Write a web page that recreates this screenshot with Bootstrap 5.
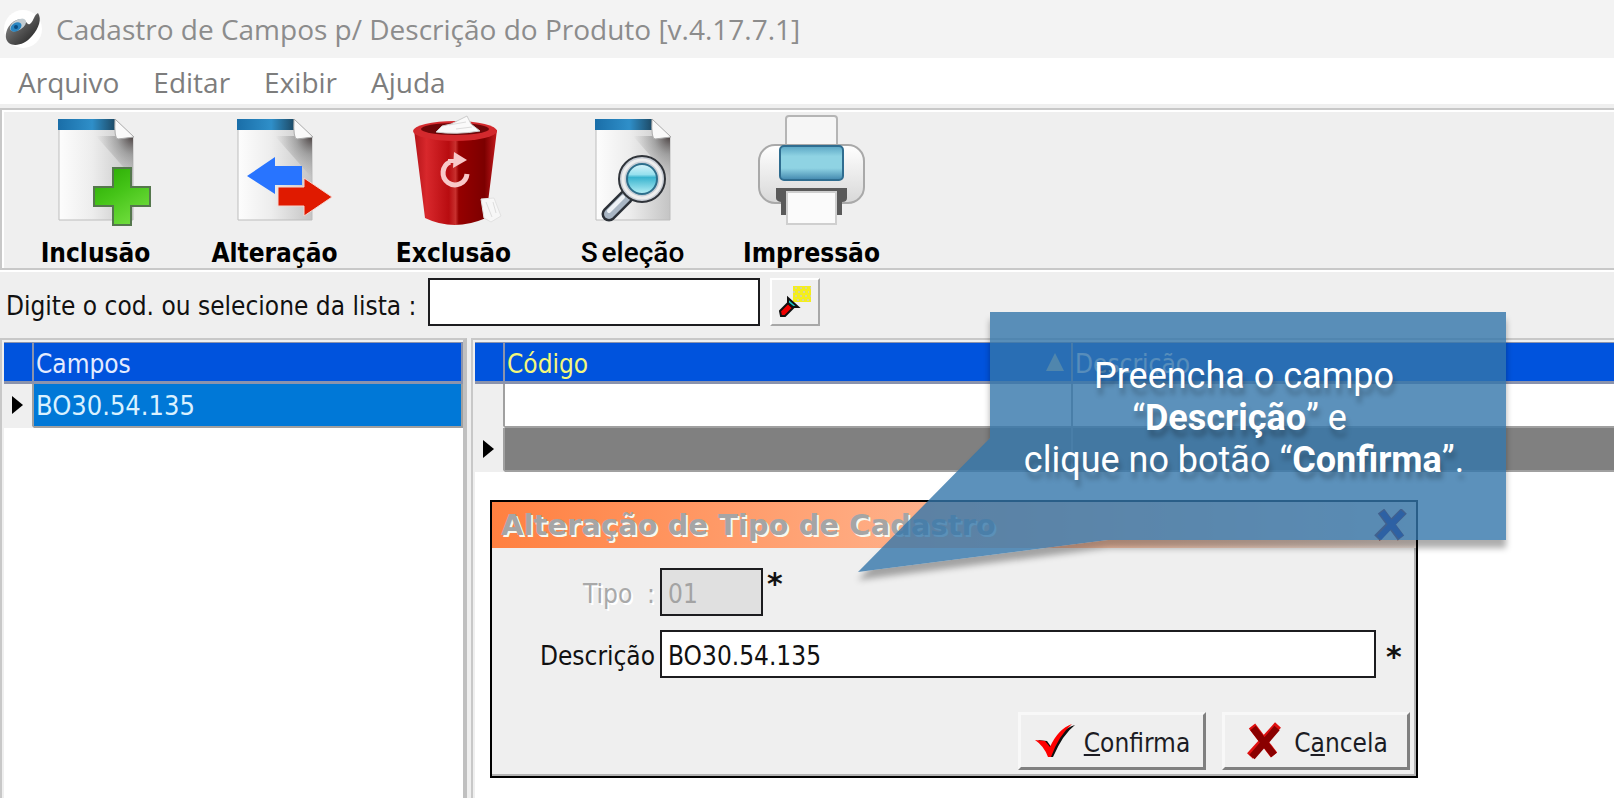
<!DOCTYPE html>
<html lang="pt-BR">
<head>
<meta charset="utf-8">
<meta name="viewport" content="width=device-width, initial-scale=1">
<title>Cadastro de Campos p/ Descrição do Produto</title>
<link rel="stylesheet" href="https://cdn.jsdelivr.net/npm/bootstrap@5.3.0/dist/css/bootstrap.min.css">
<style>
  body { background: #efefef; color: #111; overflow: hidden; font: 26px/32px "DejaVu Sans Condensed", "DejaVu Sans", sans-serif; }
  .titlebar { height: 58px; background: #f3f3f3; color: #8c8c8c; font: 28px/40px "Open Sans", sans-serif; gap: 14px; }
  .menubar { height: 46px; background: #fff; font: 28px/40px "Open Sans", sans-serif; gap: 34px; padding: 2px 18px 0; }
  .menubar a { color: #7d7d7d; }
  .toolbar { margin-top: 4px; border: solid #c8c8c8; border-width: 2px 0 2px 2px; box-shadow: inset 2px 2px #fff, 0 2px #fff; padding: 4px 0 0 4px; }
  .tool { width: 179px; border: 0; background: none; padding: 0; color: #000; font-weight: 700; line-height: 30px; }
  .tool svg { width: 120px; height: 114px; margin-bottom: 10px; }
  .tool.plain { font: 500 28px/30px Roboto, sans-serif; }
  .searchbar { height: 68px; padding: 8px 0 0 6px; }
  .searchbar label { width: 422px; padding-top: 12px; }
  .field { height: 48px; border: 2px solid #1c1c1f; border-radius: 0; background: #fff; color: #111; padding: 3px 6px 0; }
  .field:disabled { background: #e0e0e0; color: #a3a3a3; }
  .search-input { width: 332px; }
  .bevel { border: 2px solid; border-color: #fff #a8a8a8 #a8a8a8 #fff; background: #efefef; color: #1c1c24; padding: 0; }
  .lookup { width: 50px; height: 48px; margin-left: 10px; }
  .panel { background: #fff; border: solid #c8c8c8; border-width: 2px 0 0 2px; box-shadow: inset 2px 2px #efefef; padding: 2px 0 0 2px; }
  .panel-left { width: 467px; border-right: 4px solid #c0c0c0; }
  .panel-right { margin-left: 4px; }
  .grid { table-layout: fixed; width: 100%; border-collapse: separate; border-spacing: 0; line-height: 32px; }
  .grid th { height: 42px; background: #0053dd; color: #e4ebff; font-weight: 400; padding: 4px 2px 0; border: solid #8a93ad; border-width: 1px 2px 3px 0; }
  .grid td { height: 44px; padding: 2px 2px 0; border: solid #a0a0a0; border-width: 0 2px 2px 0; font-size: 27px; }
  .panel-right th:last-child, .panel-right td:last-child { border-right: 0; }
  .grid .marker { width: 30px; }
  .grid td.marker { background: #efefef; border-bottom-color: #efefef; padding: 0 0 0 8px; line-height: 0; }
  .grid .picked { background: #0078d7; color: #d9f1ff; }
  .grid .current { background: #808080; }
  .grid th.sorted { width: 568px; color: #f3f77c; }
  .dialog { left: 490px; top: 500px; width: 928px; height: 278px; border: 2px solid #000; background: #efefef; box-shadow: inset -2px -2px #b4b4b4; }
  .dialog-title { height: 46px; padding: 0 9px; background: linear-gradient(90deg, #ff8040, #ffaa80 40%, #efe4de); }
  .dialog-title h1 { font: 700 29px/44px "DejaVu Sans", sans-serif; color: #a5a5a5; text-shadow: 2px 2px #f8f8f0; }
  .form-rows { padding: 20px 6px 0; row-gap: 14px; }
  .form-rows label { width: 162px; text-align: right; padding: 3px 5px 0 0; white-space: pre; }
  .faded { color: #a9a9a9; text-shadow: 2px 2px #fff; }
  .tipo-input { width: 103px; }
  .star { font: 700 30px/32px "DejaVu Sans", sans-serif; width: 24px; padding-left: 4px; }
  .star.wide { margin-left: 6px; width: 28px; padding-top: 6px; }
  .actions { padding: 34px 6px 0 0; gap: 16px; }
  .actions .bevel { width: 188px; height: 58px; border-width: 3px; border-color: #f8f8f8 #808080 #808080 #f8f8f8; gap: 8px; }
  .actions span { padding-top: 4px; }
  .callout { left: 858px; top: 312px; width: 648px; height: 260px; z-index: 3; }
  .callout svg { overflow: visible; }
  .callout p { padding: 43px 16px 0 140px; color: #fff; font: 36px/42px Roboto, sans-serif; text-shadow: 2px 7px 5px rgba(0,0,0,.25); }
  .cast { filter: blur(3px); }
</style>
</head>
<body class="vh-100 d-flex flex-column position-relative">

<svg width="0" height="0" class="position-absolute" aria-hidden="true">
  <defs>
    <linearGradient id="paper" x1="0" y1="0" x2="1" y2="0"><stop offset="0" stop-color="#fdfdfd"/><stop offset=".45" stop-color="#ededed"/><stop offset="1" stop-color="#c4c4c4"/></linearGradient>
    <linearGradient id="band" x1="0" x2="1"><stop offset="0" stop-color="#1a6ea8"/><stop offset=".6" stop-color="#2f8fc9"/><stop offset="1" stop-color="#1d4a66"/></linearGradient>
    <radialGradient id="foldshade" cx="1" cy="0" r="1"><stop offset="0" stop-color="#463c3c"/><stop offset=".45" stop-color="#777" stop-opacity=".5"/><stop offset="1" stop-color="#999" stop-opacity="0"/></radialGradient>
    <linearGradient id="green" x1="0" y1="0" x2=".6" y2="1"><stop offset="0" stop-color="#25a800"/><stop offset=".5" stop-color="#45c418"/><stop offset="1" stop-color="#6fdc3c"/></linearGradient>
    <linearGradient id="redbin"><stop offset="0" stop-color="#b41318"/><stop offset=".15" stop-color="#d8282c"/><stop offset=".42" stop-color="#b80c10"/><stop offset=".5" stop-color="#c8302e"/><stop offset=".54" stop-color="#960000"/><stop offset=".85" stop-color="#7c0000"/><stop offset="1" stop-color="#c41a1e"/></linearGradient>
    <linearGradient id="lens" x2="0" y2="1"><stop offset="0" stop-color="#d9f4fa"/><stop offset=".35" stop-color="#96e0ee"/><stop offset=".45" stop-color="#3ab4cf"/><stop offset="1" stop-color="#b8f0f6"/></linearGradient>
    <linearGradient id="body" x2="0" y2="1"><stop offset="0" stop-color="#fff"/><stop offset="1" stop-color="#d8d8d8"/></linearGradient>
    <linearGradient id="glass" x2="0" y2="1"><stop offset="0" stop-color="#5aa5c4"/><stop offset=".3" stop-color="#8fd3e3"/><stop offset=".65" stop-color="#8fd3e3"/><stop offset="1" stop-color="#4287ae"/></linearGradient>
    <linearGradient id="eye" x2="1" y2="1"><stop offset="0" stop-color="#999"/><stop offset=".5" stop-color="#555"/><stop offset="1" stop-color="#181818"/></linearGradient>
    <g id="doc">
      <path d="M23 6H78L97 23V106H23Z" fill="url(#paper)" stroke="#bdbdbd"/>
      <rect x="22" y="5" width="57" height="11" fill="url(#band)"/>
      <path d="M60 22H97V64Z" fill="url(#foldshade)"/>
      <path d="M79 5L98 23L82 25Q78 25 79 5Z" fill="#fafafa" stroke="#aaa"/>
    </g>
  </defs>
</svg>

<header class="titlebar d-flex align-items-center flex-shrink-0 ps-1">
  <svg width="38" height="38" viewBox="0 0 38 38" aria-hidden="true">
    <circle cx="19" cy="19" r="19" fill="#fff"/>
    <path d="M2 28C1 19 8 9 18 9C23 10 23 17 27 13C30 10 30 5 34 3C38 9 35 18 28 26C19 37 4 38 2 28Z" fill="url(#eye)"/>
    <ellipse cx="14" cy="15" rx="9" ry="5" fill="#c3ccd1" transform="rotate(-32 14 15)"/>
    <ellipse cx="12" cy="17" rx="6" ry="4" fill="#2a86c2" transform="rotate(-32 12 17)"/><circle cx="12" cy="17" r="2" fill="#0b4b80"/>
  </svg>
  <span class="text-nowrap">Cadastro de Campos p/ Descrição do Produto [v.4.17.7.1]</span>
</header>

<nav class="menubar d-flex align-items-center flex-shrink-0">
  <a class="text-decoration-none" href="#">Arquivo</a>
  <a class="text-decoration-none" href="#">Editar</a>
  <a class="text-decoration-none" href="#">Exibir</a>
  <a class="text-decoration-none" href="#">Ajuda</a>
</nav>

<div class="toolbar d-flex flex-shrink-0">
  <button type="button" class="tool d-flex flex-column align-items-center">
    <svg viewBox="0 0 120 114" aria-hidden="true"><use href="#doc"/><path d="M77 54H95V73H114V92H95V111H77V92H58V73H77Z" fill="url(#green)" stroke="#55774d" stroke-width="2"/></svg>
    Inclusão
  </button>
  <button type="button" class="tool d-flex flex-column align-items-center">
    <svg viewBox="0 0 120 114" aria-hidden="true"><use href="#doc"/><path d="M32 62L60 43V52H87V71H60V80Z" fill="#2874ff"/><path d="M63 73H89V64L117 83L89 102V92H63Z" fill="#e01a00" stroke="#f6d6d0"/></svg>
    Alteração
  </button>
  <button type="button" class="tool d-flex flex-column align-items-center">
    <svg viewBox="0 0 120 114" aria-hidden="true">
      <path d="M20 16L31 104Q60 118 92 104L103 16Z" fill="url(#redbin)"/>
      <ellipse cx="61" cy="17" rx="42" ry="10" fill="#d3292d"/><ellipse cx="61" cy="15" rx="34" ry="6" fill="#6d0608"/>
      <path d="M42 18L48 12L57 10L73 2L77 10L86 17Q62 21 42 18Z" fill="#fafafa" stroke="#ccc"/><path d="M55 11L72 8M62 15L78 13" stroke="#ddd"/>
      <path d="M56 48A12 12 0 1 0 73 60" fill="none" stroke="#f8c9c9" stroke-width="5"/><path d="M60 38L73 46L59 54Z" fill="#f8c9c9"/><path d="M54 47L66 47" stroke="#f8c9c9" stroke-width="4"/>
      <path d="M87 85L100 84L107 102L97 108L90 104Z" fill="#f7f7f7" stroke="#e2e2e2"/><path d="M92 88L98 103M99 88L102 99" stroke="#ddd"/>
    </svg>
    Exclusão
  </button>
  <button type="button" class="tool plain d-flex flex-column align-items-center">
    <svg viewBox="0 0 120 114" aria-hidden="true"><use href="#doc"/>
      <path d="M53 83L36 100" stroke="#2c3138" stroke-width="15" stroke-linecap="round"/><path d="M53 83L36 100" stroke="#a9b6c4" stroke-width="10" stroke-linecap="round"/><path d="M50 83L36 97" stroke="#eef2f6" stroke-width="4" stroke-linecap="round"/>
      <circle cx="69" cy="65" r="23" fill="#c9ced6" stroke="#30343a" stroke-width="2"/><circle cx="69" cy="65" r="19" fill="none" stroke="#eee" stroke-width="3"/><circle cx="69" cy="65" r="15" fill="url(#lens)" stroke="#2d6f8c" stroke-width="2"/>
    </svg>
    <span><span class="me-1">S</span>eleção</span>
  </button>
  <button type="button" class="tool d-flex flex-column align-items-center">
    <svg viewBox="0 0 120 114" aria-hidden="true">
      <rect x="34" y="2" width="51" height="40" rx="3" fill="#f6f6f6" stroke="#b5b5b5" stroke-width="2"/>
      <rect x="7" y="31" width="105" height="58" rx="16" fill="url(#body)" stroke="#a9a9a9" stroke-width="2"/>
      <path d="M24 74H95V84Q95 88 90 88V101H29V88Q24 87 24 84Z" fill="#5a5a5a"/>
      <rect x="28" y="32" width="63" height="34" rx="4" fill="url(#glass)" stroke="#2f6d90" stroke-width="2"/>
      <path d="M35 78H84V110H35Z" fill="#fbfbfb" stroke="#cfcfcf" stroke-width="2"/>
    </svg>
    Impressão
  </button>
</div>

<form class="searchbar d-flex flex-shrink-0">
  <label for="cod" class="text-nowrap">Digite o cod. ou selecione da lista :</label>
  <input id="cod" type="text" class="field search-input">
  <button type="button" class="bevel lookup" aria-label="Localizar">
    <svg width="36" height="34" viewBox="0 0 36 34" class="d-block mx-auto" aria-hidden="true">
      <rect x="16" y="1" width="18" height="16" fill="#f4ee1c"/><path d="M18 3H34M16 7H32M18 11H34M20 15H34" stroke="#d8d49a" stroke-width="2" stroke-dasharray="2 3"/>
      <path d="M3 26L11 18L16 23L8 31H4Z" fill="#f00000" stroke="#111" stroke-width="2"/>
      <path d="M11 13L21 22L16 22L11 18Z" fill="#1cc8c8" stroke="#111" stroke-width="2"/>
    </svg>
  </button>
</form>

<main class="d-flex flex-grow-1">
  <section class="panel panel-left flex-shrink-0">
    <table class="grid">
      <thead><tr><th class="marker"></th><th>Campos</th></tr></thead>
      <tbody><tr><td class="marker"><svg width="11" height="18" viewBox="0 0 11 18"><path d="M0 0L11 9L0 18Z"/></svg></td><td class="picked">BO30.54.135</td></tr></tbody>
    </table>
  </section>
  <section class="panel panel-right flex-grow-1">
    <table class="grid">
      <thead><tr><th class="marker"></th><th class="sorted"><span class="d-flex justify-content-between align-items-center">Código <svg width="20" height="20" viewBox="0 0 20 20" class="me-1 mb-1"><path d="M10 1L19 19H1Z" fill="#c0c8b8"/></svg></span></th><th>Descrição</th></tr></thead>
      <tbody>
        <tr><td class="marker"></td><td></td><td></td></tr>
        <tr><td class="marker"><svg width="11" height="18" viewBox="0 0 11 18"><path d="M0 0L11 9L0 18Z"/></svg></td><td class="current"></td><td class="current"></td></tr>
      </tbody>
    </table>
  </section>
</main>

<section class="dialog position-absolute" role="dialog" aria-labelledby="dlg-title">
  <div class="dialog-title d-flex justify-content-between align-items-center">
    <h1 id="dlg-title" class="m-0 text-nowrap">Alteração de Tipo de Cadastro</h1>
    <button type="button" class="border-0 bg-transparent p-0" aria-label="Fechar"><svg width="34" height="32" viewBox="0 0 34 32" class="d-block"><path d="M8 2L28 29M31 2L4 29" stroke="#7a1020" stroke-width="8"/><path d="M9 3L28 28M30 3L6 29" stroke="#16128a" stroke-width="6"/></svg></button>
  </div>
  <form>
    <div class="form-rows d-flex flex-column">
      <div class="d-flex align-items-center">
        <label for="tipo" class="faded">Tipo  :</label>
        <input id="tipo" type="text" class="field tipo-input" value="01" disabled>
        <span class="star align-self-start">*</span>
      </div>
      <div class="d-flex align-items-center">
        <label for="desc">Descrição</label>
        <input id="desc" type="text" class="field flex-grow-1" value="BO30.54.135">
        <span class="star wide">*</span>
      </div>
    </div>
    <div class="actions d-flex justify-content-end">
      <button type="button" class="bevel d-flex align-items-center justify-content-center"><svg width="42" height="36" viewBox="0 0 42 36"><path d="M4 17L13 18L18 25Q26 6 41 2Q29 11 19 34H16Q11 23 4 17Z" fill="#111"/><path d="M1 17L11 18L16 24Q24 6 38 1Q25 12 17 34H14Q10 23 1 17Z" fill="#f00"/></svg><span><u>C</u>onfirma</span></button>
      <button type="button" class="bevel d-flex align-items-center justify-content-center"><svg width="42" height="38" viewBox="0 0 42 38"><path d="M8 4L30 33M34 3L6 34" stroke="#e01010" stroke-width="8"/><path d="M9 6L30 33M33 6L8 35" stroke="#8a0000" stroke-width="7"/></svg><span>C<u>a</u>ncela</span></button>
    </div>
  </form>
</section>

<aside class="callout position-absolute">
  <svg width="648" height="260" viewBox="0 0 648 260" class="position-absolute top-0 start-0" aria-hidden="true">
    <clipPath id="outside"><path clip-rule="evenodd" d="M-40 -40H700V320H-40ZM132 0H648V228H250L0 260L132 126Z"/></clipPath>
    <g clip-path="url(#outside)"><path class="cast" d="M132 0H648V228H250L0 260L132 126Z" transform="translate(0 8)" fill-opacity=".32"/></g>
    <path d="M132 0H648V228H250L0 260L132 126Z" fill="#3376aa" fill-opacity=".8"/>
  </svg>
  <p class="position-relative m-0 text-center text-nowrap">Preencha o campo<br>“<strong>Descrição</strong>” e&nbsp;<br>clique no botão “<strong>Confirma</strong>”.</p>
</aside>

<script src="https://cdn.jsdelivr.net/npm/bootstrap@5.3.0/dist/js/bootstrap.bundle.min.js"></script>
</body>
</html>
